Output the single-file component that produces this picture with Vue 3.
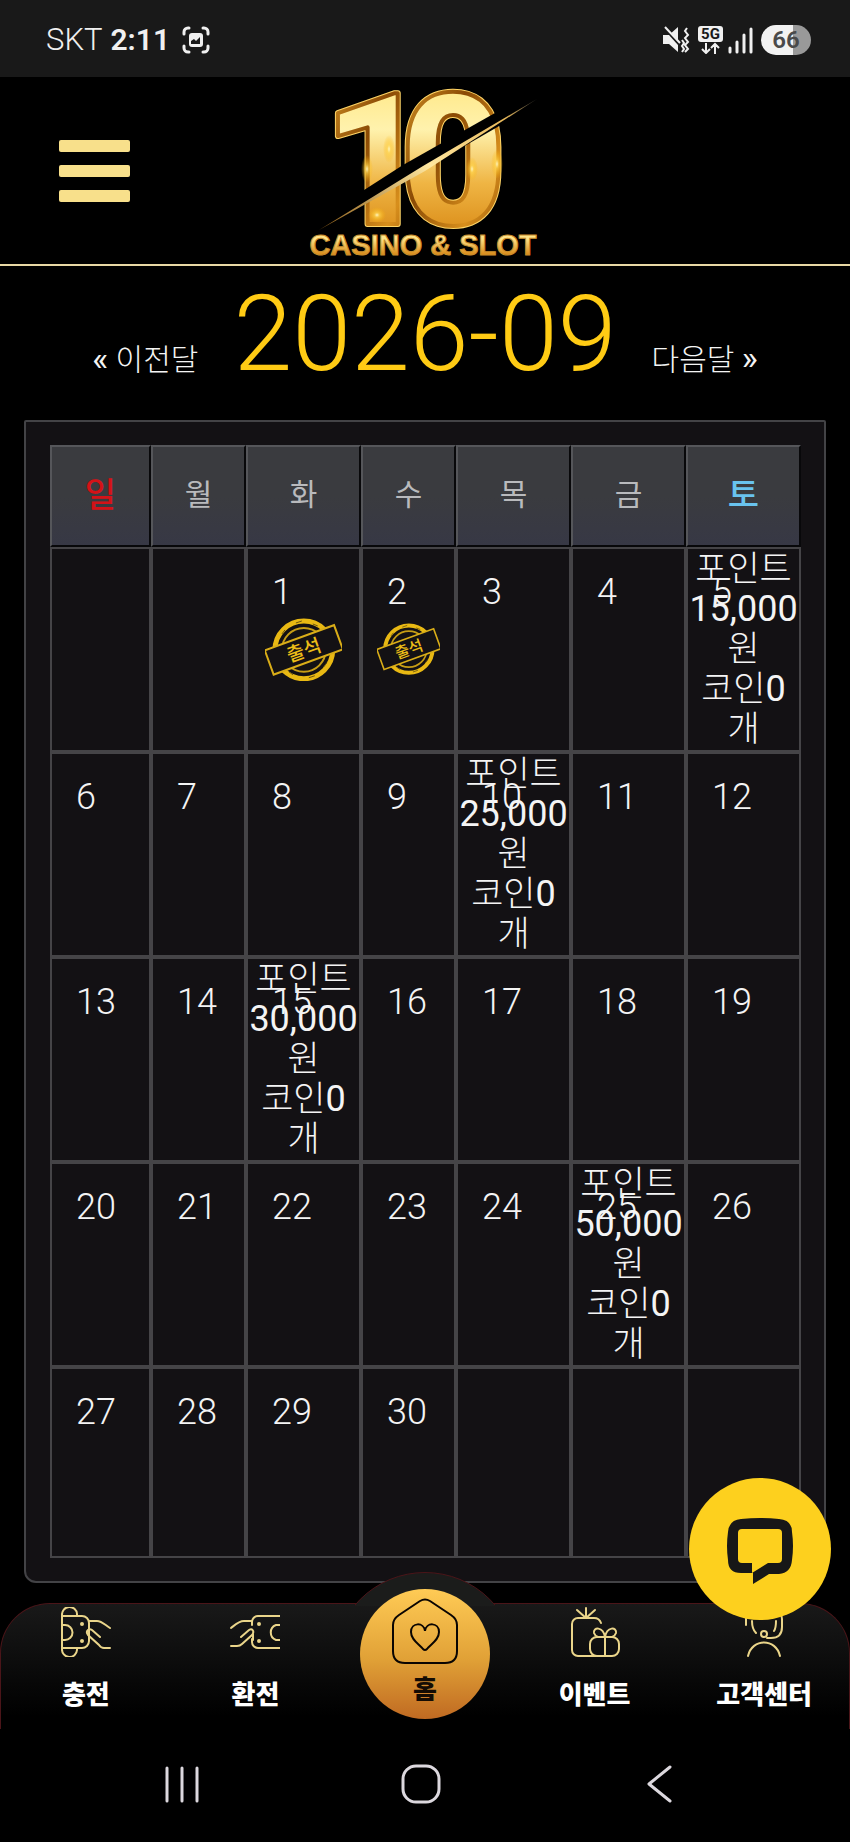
<script setup>
const weekdays = ['일', '월', '화', '수', '목', '금', '토']
const rewards = { 5: '15,000', 10: '25,000', 15: '30,000', 25: '50,000' }
const attended = [1, 2]
const weeks = Array.from({ length: 5 }, (_, w) =>
  Array.from({ length: 7 }, (_, d) => {
    const day = w * 7 + d - 1
    return day >= 1 && day <= 30 ? day : null
  })
)
</script>

<template>
  <div class="page">
    <div class="status">
      <div class="status-left">
        <span class="carrier">SKT</span>
        <span class="clock">2:11</span>
        <svg width="28" height="28" viewBox="0 0 28 28" aria-hidden="true">
          <g fill="none" stroke="#f0f0f0" stroke-width="3" stroke-linecap="round">
            <path d="M2 8V6a4 4 0 0 1 4-4h1M21 2h1a4 4 0 0 1 4 4v2M26 20v2a4 4 0 0 1-4 4h-1M7 26H6a4 4 0 0 1-4-4v-2" />
          </g>
          <rect x="7" y="7" width="14" height="14" rx="3" fill="#f0f0f0" />
          <path d="M9 18v-3l3-2 2 2 4-4v7z" fill="#191919" />
        </svg>
      </div>
      <div class="status-right">
        <svg width="28" height="28" viewBox="0 0 28 28" aria-hidden="true">
          <path d="M1 9h6l9-8v25l-9-8H1z" fill="#f0f0f0" />
          <path d="M1 0l17 19" stroke="#191919" stroke-width="3" />
          <path d="M3 1l15 16" stroke="#f0f0f0" stroke-width="2" />
          <path d="M20 14l2 3-2 3 2 3-2 3M25 2l-2 3 3 4-3 3 3 4-3 3 3 4-3 3" fill="none" stroke="#f0f0f0" stroke-width="2" />
        </svg>
        <svg width="25" height="28" viewBox="0 0 25 28" aria-hidden="true">
          <rect width="25" height="16" rx="3" fill="#f0f0f0" />
          <text x="12.5" y="13" text-anchor="middle" class="net">5G</text>
          <path d="M8 17v10M4 23l4 4 4-4M17 28V18M13 22l4-4 4 4" fill="none" stroke="#f0f0f0" stroke-width="2" />
        </svg>
        <svg width="25" height="28" viewBox="0 0 25 28" aria-hidden="true">
          <path d="M2 22v4M9 16v10M16 9v17M23 3v23" stroke="#f0f0f0" stroke-width="3" stroke-linecap="round" />
        </svg>
        <span class="battery">66</span>
      </div>
    </div>

    <header class="top">
      <button class="menu" aria-label="메뉴"><i></i><i></i><i></i></button>
      <a class="logo" href="#">
        <svg width="240" height="182" viewBox="0 0 240 182" role="img" aria-label="10 CASINO &amp; SLOT">
          <defs>
            <linearGradient id="face" x1="0" y1="0" x2="0" y2="1">
              <stop offset="0.1" stop-color="#ffe680" />
              <stop offset="0.35" stop-color="#fff2ad" />
              <stop offset="0.6" stop-color="#efb544" />
              <stop offset="0.85" stop-color="#d98a16" />
            </linearGradient>
            <linearGradient id="rim" x1="0" y1="0" x2="1" y2="1">
              <stop offset="0" stop-color="#e6a52c" />
              <stop offset="0.4" stop-color="#8a4a05" />
              <stop offset="0.7" stop-color="#d88f1c" />
              <stop offset="1" stop-color="#7a3c03" />
            </linearGradient>
            <linearGradient id="slash" x1="0" y1="1" x2="1" y2="0">
              <stop offset="0" stop-color="#8a5a14" />
              <stop offset="0.5" stop-color="#ffe7a0" />
              <stop offset="0.85" stop-color="#e9b95a" />
              <stop offset="1" stop-color="#333" />
            </linearGradient>
            <linearGradient id="word" x1="0" y1="0" x2="0" y2="1">
              <stop offset="0.3" stop-color="#ffe48a" />
              <stop offset="0.8" stop-color="#d98a18" />
            </linearGradient>
            <radialGradient id="spark">
              <stop offset="0" stop-color="#fff6c0" />
              <stop offset="0.3" stop-color="#ffd34a" stop-opacity="0.7" />
              <stop offset="1" stop-color="#ffb400" stop-opacity="0" />
            </radialGradient>
          </defs>
          <g class="ten edge"><text x="20" y="143">1</text><text x="97" y="143">0</text></g>
          <g class="ten body"><text x="20" y="143">1</text><text x="97" y="143">0</text></g>
          <ellipse cx="64" cy="88" rx="6" ry="14" fill="url(#spark)" />
          <ellipse cx="86" cy="68" rx="6" ry="14" fill="url(#spark)" />
          <ellipse cx="194" cy="83" rx="6" ry="15" fill="url(#spark)" />
          <ellipse cx="169" cy="88" rx="6" ry="12" fill="url(#spark)" />
          <ellipse cx="74" cy="134" rx="9" ry="8" fill="url(#spark)" />
          <path d="M18 148L236 22 192 32 100 84 44 120z" fill="#000" />
          <path d="M16 149L120 85 234 18 122 90z" fill="url(#slash)" />
          <text x="120" y="174" text-anchor="middle" class="word">CASINO &amp; SLOT</text>
        </svg>
      </a>
    </header>

    <main>
      <div class="month">
        <a href="#"><b>«</b> 이전달</a>
        <h1>2026-09</h1>
        <a href="#">다음달 <b>»</b></a>
      </div>

      <div class="panel">
        <table>
          <colgroup>
            <col class="c-s" /><col class="c-m" /><col class="c-l" /><col class="c-m" />
            <col class="c-l" /><col class="c-l" /><col class="c-l" />
          </colgroup>
          <thead>
            <tr><th v-for="d in weekdays" :key="d" scope="col">{{ d }}</th></tr>
          </thead>
          <tbody>
            <tr v-for="(week, w) in weeks" :key="w">
              <td v-for="(day, d) in week" :key="d">
                <span v-if="day" class="day">{{ day }}</span>
                <div v-if="rewards[day]" class="reward">
                  포인트<br /><b>{{ rewards[day] }}</b><br />원<br />코인<b>0</b><br />개
                </div>
                <svg v-if="attended.includes(day)" class="stamp" viewBox="0 0 78 64" role="img" aria-label="출석">
                  <circle cx="39" cy="32" r="29" fill="none" stroke="#e9b913" stroke-width="5" />
                  <circle cx="39" cy="32" r="22" fill="none" stroke="#c79d15" stroke-width="2" />
                  <path d="M17 16l3-4M31 5l6-2M44 60l6-2M59 49l3-4M24 54l4 3M48 6l5 2" stroke="#6b5510" />
                  <g transform="rotate(-20 39 32)">
                    <rect x="2" y="19" width="74" height="26" fill="#131114" stroke="#d9ad18" stroke-width="2" />
                    <text x="39" y="39" text-anchor="middle" class="stamp-text">출석</text>
                  </g>
                </svg>
              </td>
            </tr>
          </tbody>
        </table>
      </div>
    </main>

    <nav class="tabs">
      <div class="bump"></div>
      <a class="tab" href="#">
        <svg viewBox="0 0 50 50" aria-hidden="true">
          <path d="M1 42V8a7 7 0 0 1 15-1v2M1 9h20a7 7 0 0 1 7 7v18a7 7 0 0 1-7 7H1M1 42a7 7 0 0 0 15 1v-2M1 18h3a7 7 0 0 1 0 15H1" />
          <path d="M28 14h8c5 0 8 4 13 7M39 30l-8-7c-3-2-7 1-4 5l11 10q2 3 5 3h6" />
          <circle cx="21" cy="17" r="1" /><circle cx="21" cy="34" r="1" />
        </svg>
        <span>충전</span>
      </a>
      <a class="tab" href="#">
        <svg viewBox="0 0 50 50" aria-hidden="true">
          <path d="M50 9H28a6 6 0 0 0-6 6v3M22 32v3a6 6 0 0 0 6 6h22M50 18h-4a8 8 0 0 0 0 15h4" />
          <path d="M22 14h-8c-5 0-8 3-13 7M11 30l8-7c3-2 6 1 3 5L12 37q-2 2-5 2H1M23 27v6" />
          <circle cx="29" cy="17" r="1" /><circle cx="29" cy="34" r="1" />
        </svg>
        <span>환전</span>
      </a>
      <a class="tab home" href="#">
        <svg viewBox="0 0 66 66" aria-hidden="true">
          <path d="M28 3q5-3 10 0l21 14q6 4 6 10v26q0 12-12 12H13Q1 65 1 53V27q0-6 6-10z" />
          <path d="M33 33c-1-9-14-9-14 1 0 8 8 12 12 17q2 2 4 0c4-5 12-9 12-17 0-10-13-10-14-1z" />
        </svg>
        <span>홈</span>
      </a>
      <a class="tab" href="#">
        <svg viewBox="0 0 50 50" aria-hidden="true">
          <path d="M16 11V1M16 11L7 3M16 11l9-8M31 16c-1-3-3-5-7-5H8a6 6 0 0 0-6 6v26a6 6 0 0 0 6 6h18" />
          <rect x="20" y="30" width="29" height="19" rx="7" />
          <path d="M35 49V30c-2-11-12-10-11-4q1 3 4 4M35 30c2-11 12-10 11-4q-1 3-4 4" />
        </svg>
        <span>이벤트</span>
      </a>
      <a class="tab" href="#">
        <svg viewBox="0 0 50 50" aria-hidden="true">
          <path d="M9 49c4-18 28-18 32 0M7 18v-6a18 12 0 0 1 36 0v8q0 11-11 11h-4M13 14c0 6 1 9 4 12M37 14c0 5 0 7-2 10" />
          <circle cx="25" cy="27" r="3" />
        </svg>
        <span>고객센터</span>
      </a>
      <button class="chat" aria-label="채팅">
        <svg width="66" height="66" viewBox="0 0 66 66" aria-hidden="true">
          <path fill="#171717" fill-rule="evenodd" d="M14 1Q33-1 52 1 65 2 65 14 67 28 65 42 64 55 52 56H42L26 66V55H14Q1 55 1 42-1 28 1 14 2 2 14 1zM15 11q-4 0-4 4v26q0 4 4 4h10v10l16-10h10q4 0 4-4V15q0-4-4-4z" />
        </svg>
      </button>
    </nav>

    <footer class="system">
      <button aria-label="최근 앱"><svg width="40" height="40" viewBox="0 0 40 40"><path d="M5 4v33M20 4v33M35 4v33" /></svg></button>
      <button aria-label="홈 화면"><svg width="40" height="40" viewBox="0 0 40 40"><rect x="2" y="2" width="36" height="36" rx="13" /></svg></button>
      <button aria-label="뒤로"><svg width="40" height="40" viewBox="0 0 40 40"><path d="M31 3L10 20l21 17" /></svg></button>
    </footer>
  </div>
</template>

<style>
body {
  margin: 0;
  background: #000;
}
</style>

<style scoped>
.page {
  background: #000;
  color: #f4f4f4;
  font-family: Roboto, "Noto Sans CJK KR", sans-serif;
}
a {
  color: inherit;
  text-decoration: none;
}
button {
  border: 0;
  padding: 0;
  background: none;
}
svg {
  display: block;
}
.status {
  display: flex;
  align-items: center;
  justify-content: space-between;
  height: 77px;
  padding: 2px 39px 0 46px;
  box-sizing: border-box;
  background: #191919;
  color: #f0f0f0;
  font-size: 31px;
}
.status-left,
.status-right {
  display: flex;
  align-items: center;
  gap: 8px;
}
.status-left svg {
  margin-left: 4px;
}
.status-right svg + svg {
  margin-right: -3px;
}
.carrier {
  font-weight: 300;
}
.clock {
  font-size: 30px;
  font-weight: 600;
}
.net {
  font-size: 15px;
  font-weight: 700;
  fill: #191919;
}
.battery {
  width: 50px;
  margin-left: 3px;
  border-radius: 15px;
  background: linear-gradient(90deg, #f2f2f2 65%, #999 65%);
  color: #4a4a4a;
  font-size: 24px;
  font-weight: 600;
  line-height: 30px;
  text-align: center;
}
.top {
  position: relative;
  display: flex;
  justify-content: center;
  height: 189px;
  box-sizing: border-box;
  border-bottom: 2px solid #e9d9a5;
}
.menu {
  position: absolute;
  left: 59px;
  top: 63px;
  display: grid;
  gap: 13px;
  width: 71px;
}
.menu i {
  height: 12px;
  border-radius: 2px;
  background: #f8e08b;
}
.logo {
  margin: 4px 4px 0 0;
}
.ten {
  font: 900 183px Roboto, sans-serif;
  stroke-linejoin: round;
}
.edge {
  fill: #ffdc70;
  stroke: #ffd566;
  stroke-width: 6;
}
.body {
  fill: url(#face);
  stroke: url(#rim);
  stroke-width: 4;
}
.word {
  font: 700 29px "Liberation Sans", sans-serif;
  fill: url(#word);
  stroke: #c98e2c;
  stroke-width: 1;
}
.month {
  display: flex;
  align-items: baseline;
  justify-content: center;
  gap: 35px;
  height: 154px;
  font-size: 30px;
  font-weight: 300;
}
.month b {
  font-size: 34px;
  font-weight: 400;
}
h1 {
  margin: 8px 0 0;
  color: #ffcb14;
  font-size: 106px;
  font-weight: 300;
  line-height: 120px;
}
.panel {
  margin: 0 24px;
  padding: 23px 24px;
  border: 2px solid #434346;
  border-radius: 2px 2px 12px 12px;
  background: #131114;
}
table {
  width: 100%;
  table-layout: fixed;
  border-spacing: 0;
}
.c-s { width: 101px; }
.c-m { width: 95px; }
.c-l { width: 115px; }
th {
  height: 102px;
  box-sizing: border-box;
  padding: 0 0 8px;
  border: 2px solid;
  border-color: #55565a #08080a #08080a #55565a;
  background: linear-gradient(#3a3b3f 50%, #373845);
  color: #b9babd;
  font-size: 30px;
  font-weight: 400;
}
th:first-child {
  color: #d41217;
  font-size: 34px;
  font-weight: 500;
}
th:last-child {
  color: #69c3ee;
  font-size: 34px;
  font-weight: 500;
}
td {
  position: relative;
  height: 205px;
  box-sizing: border-box;
  padding: 0;
  border: 2px solid #454447;
}
tr:last-child td {
  height: 191px;
}
.day {
  position: absolute;
  left: 24px;
  top: 23px;
  font-size: 36px;
  font-weight: 300;
  line-height: 40px;
}
.reward {
  font-size: 35px;
  font-weight: 300;
  line-height: 40px;
  text-align: center;
  white-space: nowrap;
}
.reward b {
  font-size: 36px;
  font-weight: 400;
  line-height: 36px;
}
.stamp {
  width: 70%;
  margin: 0 auto;
}
.stamp-text {
  font-size: 19px;
  font-weight: 500;
  fill: #ecbd17;
}
.tabs {
  position: relative;
  display: grid;
  grid-template-columns: repeat(5, 1fr);
  height: 126px;
  box-sizing: border-box;
  margin-top: 20px;
  border: 1px solid #4b1519;
  border-bottom: 0;
  border-radius: 50px 50px 0 0;
  background: linear-gradient(#191919, #000 90%);
}
.bump {
  position: absolute;
  left: 50%;
  top: -32px;
  width: 140px;
  height: 34px;
  overflow: hidden;
  transform: translateX(-50%);
}
.bump::before {
  content: "";
  position: absolute;
  left: -22px;
  top: 0;
  width: 182px;
  height: 182px;
  border: 1px solid #4b1519;
  border-radius: 50%;
  background: #1b1c1b;
}
.tab {
  display: flex;
  flex-direction: column;
  align-items: center;
  gap: 20px;
  padding-top: 3px;
  color: #fff;
  font-size: 26px;
  font-weight: 900;
  line-height: 36px;
}
.tab svg {
  width: 50px;
  height: 50px;
  fill: none;
  stroke: #ead58a;
  stroke-width: 2;
  stroke-linecap: round;
}
.home {
  position: relative;
  justify-self: center;
  width: 130px;
  height: 130px;
  gap: 8px;
  margin-top: -15px;
  padding-top: 9px;
  box-sizing: border-box;
  border-radius: 50%;
  background: linear-gradient(#ffcb55, #e0a036 55%, #c06a22);
  color: #140c04;
}
.home svg {
  width: 66px;
  height: 66px;
  stroke: #0a0502;
  flex: none;
}
.chat {
  position: absolute;
  right: 18px;
  top: -126px;
  display: grid;
  place-items: center;
  width: 142px;
  height: 142px;
  padding-top: 4px;
  border-radius: 50%;
  background: #fdd01e;
}
.system {
  display: flex;
  justify-content: space-between;
  padding: 35px 171px 38px 162px;
}
.system svg {
  fill: none;
  stroke: #dcd8de;
  stroke-width: 3;
  stroke-linecap: round;
  stroke-linejoin: round;
}
</style>
